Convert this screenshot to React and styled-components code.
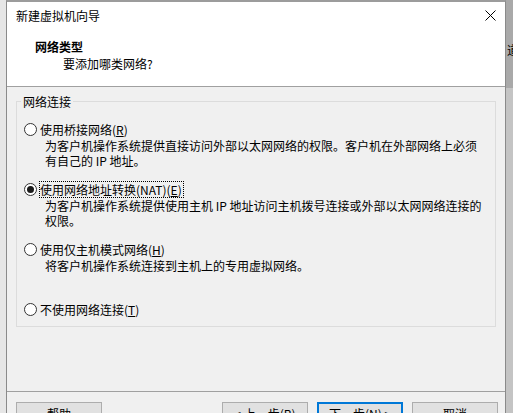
import React from 'react'
import styled, { createGlobalStyle } from 'styled-components'

const GlobalStyle = createGlobalStyle`
    html, body {
        margin: 0;
        padding: 0;
        background: #e6e6e6;
        overflow: hidden;
    }
    body {
        font-family: "Noto Sans CJK SC", "Microsoft YaHei UI", sans-serif;
        font-size: 12px;
        color: #000;
    }
`

const Page = styled.div`
    display: flex;
    width: 513px;
    height: 413px;
    padding-left: 6px;
    box-sizing: border-box;
    overflow: hidden;
`

const Window = styled.div`
    width: 500px;
    flex-shrink: 0;
    height: 440px;
    box-sizing: border-box;
    border: 1px solid #8a8a8a;
    border-top: 2px solid #9c9c9c;
    border-bottom: none;
    background: #f0f0f0;
    display: flex;
    flex-direction: column;
`

const Backdrop = styled.div`
    flex: 1;
    background: linear-gradient(to bottom, #a9a9a9 0, #a9a9a9 88px, #c4c4c4 88px);
    padding-top: 42px;
    overflow: hidden;
    font-size: 12px;
    line-height: 16px;
    white-space: nowrap;
    text-indent: 1px;
`

const TitleBar = styled.div`
    height: 27px;
    background: #fff;
    display: flex;
    align-items: center;
    justify-content: space-between;
    padding: 0 9px;
    line-height: 27px;
`

const CloseButton = styled.div`
    display: flex;
    align-items: center;
    height: 27px;
    svg { display: block; }
`

const Header = styled.div`
    height: 58px;
    box-sizing: border-box;
    background: #fff;
    border-bottom: 1px solid #a0a0a0;
    padding: 9px 0 0 28px;
`

const HeaderTitle = styled.div`
    font-weight: 700;
    line-height: 17px;
`

const HeaderSubtitle = styled.div`
    line-height: 17px;
    padding-left: 28px;
`

const Body = styled.div`
    height: 304px;
    box-sizing: border-box;
    padding: 6px 9px 0 9px;
`

const GroupBox = styled.fieldset`
    margin: 0;
    padding: 11px 7px 8px 7px;
    border: 1px solid #dcdcdc;
    min-width: 0;
    display: flex;
    flex-direction: column;
    gap: 13px;
`

const GroupLegend = styled.legend`
    padding: 0 2px;
    margin-left: -3px;
    line-height: 17px;
`

const Option = styled.div`
    display: flex;
    flex-direction: column;
`

const OptionRow = styled.div`
    display: flex;
    align-items: center;
    height: 17px;
`

const Radio = styled.span`
    width: 13px;
    height: 13px;
    box-sizing: border-box;
    border: 1px solid #333;
    border-radius: 50%;
    background: #fff;
    display: flex;
    align-items: center;
    justify-content: center;
    margin-right: 2px;
    &::after {
        content: "";
        width: 7px;
        height: 7px;
        border-radius: 50%;
        background: ${p => (p.$checked ? '#1a1a1a' : 'transparent')};
    }
`

const OptionLabel = styled.span`
    border: 1px dotted ${p => (p.$focused ? '#000' : 'transparent')};
    line-height: 15px;
    padding: 0 1px 0 0;
    white-space: nowrap;
`

const Key = styled.u`
    text-underline-offset: 1px;
`

const Description = styled.div`
    padding-left: 21px;
    line-height: 15px;
    min-height: ${p => (p.$lines ? p.$lines * 15 : 0)}px;
    white-space: nowrap;
`

const Footer = styled.div`
    border-top: 1px solid #a0a0a0;
    padding: 10px 7px 0 9px;
    display: flex;
    justify-content: space-between;
`

const ButtonGroup = styled.div`
    display: flex;
    gap: 9px;
`

const Button = styled.div`
    width: 86px;
    height: 23px;
    box-sizing: border-box;
    background: #e1e1e1;
    border: ${p => (p.$default ? '2px solid #0078d7' : '1px solid #adadad')};
    display: flex;
    align-items: center;
    justify-content: center;
    line-height: 16px;
    white-space: nowrap;
`

const options = [
    {
        label: '使用桥接网络', key: 'R',
        desc: ['为客户机操作系统提供直接访问外部以太网网络的权限。客户机在外部网络上必须', '有自己的 IP 地址。'],
    },
    {
        label: '使用网络地址转换(NAT)', key: 'E', checked: true,
        desc: ['为客户机操作系统提供使用主机 IP 地址访问主机拨号连接或外部以太网网络连接的', '权限。'],
    },
    {
        label: '使用仅主机模式网络', key: 'H', lines: 2,
        desc: ['将客户机操作系统连接到主机上的专用虚拟网络。'],
    },
    {
        label: '不使用网络连接', key: 'T',
        desc: [],
    },
]

function CloseIcon() {
    return (
        <svg width="11" height="11" viewBox="0 0 11 11">
            <path d="M0.5 0.5 L10.5 10.5 M10.5 0.5 L0.5 10.5" stroke="#000" strokeWidth="1" fill="none" />
        </svg>
    )
}

export default function App() {
    return (
        <>
            <GlobalStyle />
            <Page>
                <Window>
                    <TitleBar>
                        <span>新建虚拟机向导</span>
                        <CloseButton><CloseIcon /></CloseButton>
                    </TitleBar>
                    <Header>
                        <HeaderTitle>网络类型</HeaderTitle>
                        <HeaderSubtitle>要添加哪类网络?</HeaderSubtitle>
                    </Header>
                    <Body>
                        <GroupBox>
                            <GroupLegend>网络连接</GroupLegend>
                            {options.map(opt => (
                                <Option key={opt.key}>
                                    <OptionRow>
                                        <Radio $checked={opt.checked} />
                                        <OptionLabel $focused={opt.checked}>
                                            {opt.label}(<Key>{opt.key}</Key>)
                                        </OptionLabel>
                                    </OptionRow>
                                    {opt.desc.length > 0 && (
                                        <Description $lines={opt.lines}>
                                            {opt.desc.map((line, i) => <div key={i}>{line}</div>)}
                                        </Description>
                                    )}
                                </Option>
                            ))}
                        </GroupBox>
                    </Body>
                    <Footer>
                        <Button>帮助</Button>
                        <ButtonGroup>
                            <Button>&lt; 上一步(<Key>B</Key>)</Button>
                            <Button $default>下一步(<Key>N</Key>) &gt;</Button>
                            <Button>取消</Button>
                        </ButtonGroup>
                    </Footer>
                </Window>
                <Backdrop>道</Backdrop>
            </Page>
        </>
    )
}
